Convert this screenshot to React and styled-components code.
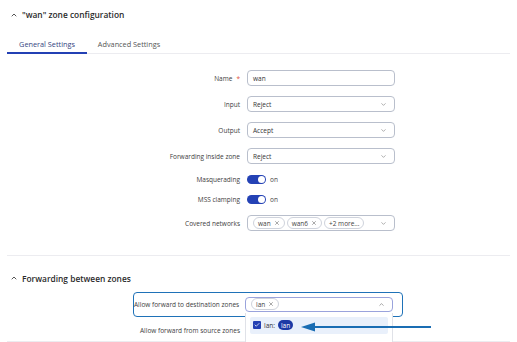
import React from "react";
import styled, { createGlobalStyle } from "styled-components";
import { ChevronUp, ChevronDown, X, Check } from "lucide-react";

const GlobalStyle = createGlobalStyle`
  html, body {
    margin: 0;
    padding: 0;
    background: #ffffff;
  }
  body {
    font-family: "Open Sans", "Noto Sans", sans-serif;
    color: #3b3b3b;
  }
`;

const Page = styled.div`
  position: relative;
  width: 517px;
  height: 342px;
  overflow: hidden;
  background: #fff;
`;

const SectionHeader = styled.div`
  display: flex;
  align-items: center;
  gap: 4px;
  height: ${({ $h }) => $h}px;
  margin-top: ${({ $top }) => $top || 0}px;
  padding-left: 10px;
  font-size: 8.4px;
  font-weight: 600;
  color: #2b2b2b;
`;

const Tabs = styled.div`
  display: flex;
  margin: 0 7px;
  height: 24px;
  border-bottom: 1px solid #ececf0;
`;

const Tab = styled.div`
  width: ${({ $w }) => $w}px;
  display: flex;
  align-items: center;
  justify-content: center;
  padding-top: 6px;
  font-size: 7.3px;
  color: ${({ $active }) => ($active ? "#33457f" : "#555")};
  border-bottom: 2px solid ${({ $active }) => ($active ? "#2340b4" : "transparent")};
  margin-bottom: -1px;
`;

const Form = styled.div`
  display: flex;
  flex-direction: column;
  padding-top: 11px;
`;

const Row = styled.div`
  display: flex;
  align-items: center;
  height: ${({ $h }) => $h}px;
  margin-top: ${({ $top }) => $top || 0}px;
  gap: 7px;
`;

const Label = styled.div`
  width: ${({ $w }) => $w || 240}px;
  text-align: right;
  font-size: 6.5px;
  color: #3d3d3d;
  white-space: nowrap;
`;

const Star = styled.span`
  color: #e2533f;
  margin-left: 4px;
`;

const Field = styled.div`
  position: relative;
  box-sizing: border-box;
  width: 148px;
  height: 15.5px;
  border: 1px solid ${({ $focus }) => ($focus ? "#9aa3dc" : "#b9bfcc")};
  border-radius: 4px;
  display: flex;
  align-items: center;
  padding: 0 7px 0 5px;
  font-size: 6.5px;
  color: #333;
  background: #fff;
`;

const FieldText = styled.span`
  flex: 1;
`;

const Chips = styled.div`
  flex: 1;
  display: flex;
  gap: 2px;
`;

const Chip = styled.span`
  display: inline-flex;
  align-items: center;
  gap: 3px;
  height: 10px;
  padding: 0 4px;
  border: 1px solid #cfd3dc;
  border-radius: 6px;
  font-size: 6.5px;
  color: #444;
`;

const ToggleWrap = styled.div`
  display: flex;
  align-items: center;
  gap: 4px;
  font-size: 6.5px;
  color: #444;
`;

const Toggle = styled.span`
  position: relative;
  width: 19px;
  height: 9px;
  border-radius: 5px;
  background: #2442b5;
  &::after {
    content: "";
    position: absolute;
    right: 1px;
    top: 1px;
    width: 7px;
    height: 7px;
    border-radius: 50%;
    background: #fff;
  }
`;

const Divider = styled.div`
  margin: ${({ $m }) => $m};
  height: 1px;
  background: #ececf0;
`;

const Highlight = styled.div`
  box-sizing: border-box;
  margin-left: 133px;
  width: 270px;
  height: 24.5px;
  border: 1.5px solid #1f72b8;
  border-radius: 4px;
  display: flex;
  align-items: center;
  gap: 7px;
`;

const Dropdown = styled.div`
  position: absolute;
  left: -1px;
  top: 15px;
  width: 148px;
  height: 40px;
  box-sizing: border-box;
  background: #fff;
  border-left: 1px solid #e0e2e8;
  border-right: 1px solid #e0e2e8;
  padding: 4px 4px 0;
  z-index: 2;
`;

const Option = styled.div`
  height: 17px;
  border-radius: 2px;
  background: #e9f0fb;
  display: flex;
  align-items: center;
  gap: 3px;
  padding-left: 3px;
  font-size: 6.5px;
  color: #333;
`;

const CheckBox = styled.span`
  width: 8px;
  height: 8px;
  border-radius: 1px;
  background: #2340b4;
  display: inline-flex;
  align-items: center;
  justify-content: center;
`;

const Pill = styled.span`
  display: inline-flex;
  align-items: center;
  justify-content: center;
  height: 10px;
  padding: 0 3px;
  border-radius: 5px;
  background: #1c3aa6;
  color: #fff;
  font-size: 6.5px;
`;

const Arrow = styled.svg`
  position: absolute;
  left: 300px;
  top: 321px;
  z-index: 3;
`;

const Caret = () => <ChevronDown size={7} strokeWidth={1.6} color="#555" />;
const Remove = () => <X size={6} strokeWidth={2} color="#555" />;

export default function App() {
  return (
    <Page>
      <GlobalStyle />
      <SectionHeader $h={29}>
        <ChevronUp size={8} strokeWidth={2.5} color="#333" />
        "wan" zone configuration
      </SectionHeader>
      <Tabs>
        <Tab $w={80} $active>General Settings</Tab>
        <Tab $w={84}>Advanced Settings</Tab>
      </Tabs>
      <Form>
        <Row $h={26}>
          <Label>
            Name<Star>*</Star>
          </Label>
          <Field>
            <FieldText>wan</FieldText>
          </Field>
        </Row>
        <Row $h={26}>
          <Label>Input</Label>
          <Field>
            <FieldText>Reject</FieldText>
            <Caret />
          </Field>
        </Row>
        <Row $h={26}>
          <Label>Output</Label>
          <Field>
            <FieldText>Accept</FieldText>
            <Caret />
          </Field>
        </Row>
        <Row $h={26}>
          <Label>Forwarding inside zone</Label>
          <Field>
            <FieldText>Reject</FieldText>
            <Caret />
          </Field>
        </Row>
        <Row $h={20}>
          <Label>Masquerading</Label>
          <ToggleWrap>
            <Toggle />
            on
          </ToggleWrap>
        </Row>
        <Row $h={20}>
          <Label>MSS clamping</Label>
          <ToggleWrap>
            <Toggle />
            on
          </ToggleWrap>
        </Row>
        <Row $h={28}>
          <Label>Covered networks</Label>
          <Field>
            <Chips>
              <Chip>
                wan <Remove />
              </Chip>
              <Chip>
                wan6 <Remove />
              </Chip>
              <Chip>+2 more...</Chip>
            </Chips>
            <Caret />
          </Field>
        </Row>
      </Form>
      <Divider $m="18px 7px 0" />
      <SectionHeader $h={28} $top={8}>
        <ChevronUp size={8} strokeWidth={2.5} color="#333" />
        Forwarding between zones
      </SectionHeader>
      <Highlight>
        <Label $w={104}>Allow forward to destination zones</Label>
        <Field $focus>
          <Chips>
            <Chip>
              lan <Remove />
            </Chip>
          </Chips>
          <ChevronUp size={7} strokeWidth={1.6} color="#444" />
          <Dropdown>
            <Option>
              <CheckBox>
                <Check size={6} strokeWidth={3} color="#fff" />
              </CheckBox>
              lan:
              <Pill>lan</Pill>
            </Option>
          </Dropdown>
        </Field>
      </Highlight>
      <Row $h={20} $top={4}>
        <Label>Allow forward from source zones</Label>
      </Row>
      <Divider $m="0 7px" />
      <Arrow width="132" height="12" viewBox="0 0 132 12">
        <line x1="10" y1="6" x2="131" y2="6" stroke="#1a6db3" strokeWidth="2" />
        <path d="M1 6 L15 1.5 L15 10.5 Z" fill="#1a6db3" />
      </Arrow>
    </Page>
  );
}
